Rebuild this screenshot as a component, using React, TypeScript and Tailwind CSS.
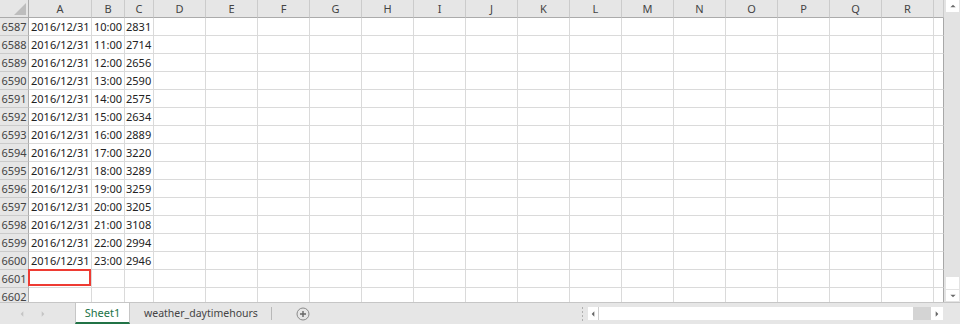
const rows: [number, string, string, string][] = [
  [6587, "2016/12/31", "10:00", "2831"],
  [6588, "2016/12/31", "11:00", "2714"],
  [6589, "2016/12/31", "12:00", "2656"],
  [6590, "2016/12/31", "13:00", "2590"],
  [6591, "2016/12/31", "14:00", "2575"],
  [6592, "2016/12/31", "15:00", "2634"],
  [6593, "2016/12/31", "16:00", "2889"],
  [6594, "2016/12/31", "17:00", "3220"],
  [6595, "2016/12/31", "18:00", "3289"],
  [6596, "2016/12/31", "19:00", "3259"],
  [6597, "2016/12/31", "20:00", "3205"],
  [6598, "2016/12/31", "21:00", "3108"],
  [6599, "2016/12/31", "22:00", "2994"],
  [6600, "2016/12/31", "23:00", "2946"],
  [6601, "", "", ""],
  [6602, "", "", ""],
];

const letters = ["A", "B", "C", "D", "E", "F", "G", "H", "I", "J", "K", "L", "M", "N", "O", "P", "Q", "R", ""];

function Tri({ dir, className }: { dir: "up" | "down" | "left" | "right"; className?: string }) {
  const pts = {
    up: "0,5 4,1 8,5",
    down: "0,1 4,5 8,1",
    left: "5,0 1,4 5,8",
    right: "1,0 5,4 1,8",
  }[dir];
  const vb = dir === "up" || dir === "down" ? "0 0 8 6" : "0 0 6 8";
  return (
    <svg viewBox={vb} className={className}>
      <polygon points={pts} fill="currentColor" />
    </svg>
  );
}

export default function App() {
  return (
    <div className="flex h-[324px] w-[960px] flex-col overflow-hidden bg-white font-['Noto_Sans',sans-serif] text-[11px] leading-[17px] text-[#222]">
      <div className="flex h-[302px]">
        <div className="grid w-[944px] grid-cols-[29px_63px_33px_29px_repeat(15,52px)_10px] auto-rows-[18px] overflow-hidden">
          {/* header row */}
          <div className="relative border-b border-r border-[#ababab] bg-[#e6e6e6]">
            <svg className="absolute left-0 top-0 h-[18px] w-[29px]" viewBox="0 0 29 18">
              <polygon points="26,3 26,15 14,15" fill="#bdbdbd" />
            </svg>
          </div>
          {letters.map((l, i) => (
            <div
              key={i}
              className="border-b border-r border-b-[#ababab] border-r-[#cbcbcb] bg-[#e6e6e6] text-center text-[#444]"
            >
              {l}
            </div>
          ))}

          {rows.map(([n, a, b, c]) => (
            <div key={n} className="contents">
              <div className="overflow-hidden border-b border-r border-b-[#cbcbcb] border-r-[#ababab] bg-[#e6e6e6] text-center text-[#444]">
                {n}
              </div>
              <div className="relative whitespace-nowrap border-b border-r border-[#dadada] pl-[2px]">
                {a}
                {n === 6601 && (
                  <div className="absolute -left-[1px] -top-[1px] h-[17px] w-[63px] border-2 border-[#ee3b33]" />
                )}
              </div>
              <div className="whitespace-nowrap border-b border-r border-[#dadada] pl-[2px]">{b}</div>
              <div className="whitespace-nowrap border-b border-r border-[#dadada] pl-[1px]">{c}</div>
              {letters.slice(3).map((_, i) => (
                <div
                  key={i}
                  className={`border-b border-r ${i === 15 ? "border-r-[#a8a8a8] border-b-[#dadada]" : "border-[#dadada]"}`}
                />
              ))}
            </div>
          ))}
        </div>

        {/* vertical scrollbar */}
        <div className="flex w-[16px] flex-col items-center justify-between bg-[#e3e3e3] pl-[1px]">
          <div className="flex h-[12px] w-[13px] items-center justify-center bg-white text-[#6a6a6a]">
            <Tri dir="up" className="h-[4px] w-[6px]" />
          </div>
          <div className="flex w-[13px] flex-col gap-[1px] pb-[1px]">
            <div className="h-[12px] w-[13px] bg-white" />
            <div className="flex h-[11px] w-[13px] items-center justify-center bg-white text-[#6a6a6a]">
              <Tri dir="down" className="h-[4px] w-[6px]" />
            </div>
          </div>
        </div>
      </div>

      {/* sheet tabs bar */}
      <div className="flex h-[22px] items-stretch border-t border-[#c6c6c6] bg-[#e6e6e6] text-[#444]">
        <div className="flex w-[75px] items-center pl-[20px] text-[#c4c4c4]">
          <Tri dir="left" className="h-[6px] w-[4px]" />
          <Tri dir="right" className="ml-[17px] h-[6px] w-[4px]" />
        </div>
        <div className="flex w-[55px] items-center justify-center border-b-2 border-l border-r border-b-[#217346] border-l-[#c6c6c6] border-r-[#c6c6c6] bg-white text-[#217346]">
          Sheet1
        </div>
        <div className="flex w-[141px] items-center pl-[14px] whitespace-nowrap text-[10.5px]">weather_daytimehours</div>
        <div className="my-auto h-[13px] w-px bg-[#b8b8b8]" />
        <div className="flex w-[62px] items-center justify-center">
          <svg viewBox="0 0 14 14" className="h-[14px] w-[14px]">
            <circle cx="7" cy="7" r="6" fill="none" stroke="#8a8a8a" strokeWidth="1" />
            <path d="M7 4v6M4 7h6" stroke="#666" strokeWidth="1.4" />
          </svg>
        </div>
        <div className="flex-1" />
        <div className="flex w-[12px] flex-col items-center justify-center gap-[2px]">
          <div className="h-[2px] w-[1px] bg-[#b0b0b0]" />
          <div className="h-[2px] w-[1px] bg-[#b0b0b0]" />
          <div className="h-[2px] w-[1px] bg-[#b0b0b0]" />
          <div className="h-[2px] w-[1px] bg-[#b0b0b0]" />
        </div>
        <div className="flex w-[356px] items-center">
          <div className="flex h-[13px] w-full">
            <div className="flex w-[11px] items-center justify-center border-r border-[#cfcfcf] bg-white text-[#666]">
              <Tri dir="left" className="h-[6px] w-[4px]" />
            </div>
            <div className="w-[314px] bg-white" />
            <div className="w-[18px] bg-[#d4d4d4]" />
            <div className="flex w-[12px] items-center justify-center bg-white text-[#666]">
              <Tri dir="right" className="h-[6px] w-[4px]" />
            </div>
          </div>
        </div>
        <div className="w-[16px]" />
      </div>
    </div>
  );
}
